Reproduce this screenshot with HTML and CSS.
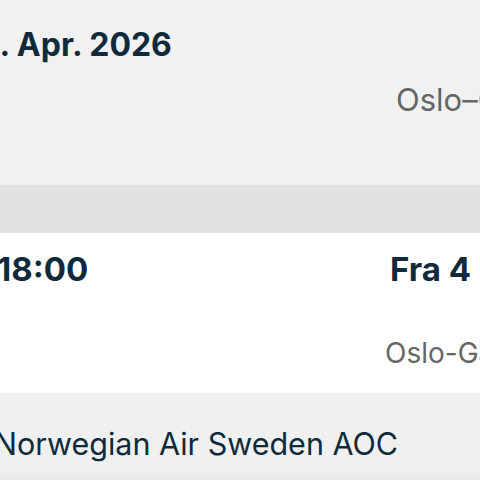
FILE: index.html
```html
<!DOCTYPE html>
<html lang="no">
<head>
<meta charset="utf-8">
<link rel="stylesheet" href="styles.css">
</head>
<body>
<main class="page">
  <section class="hero">
    <h1 class="date">4. Apr. 2026</h1>
    <p class="route route-top">Oslo–Gardermoen</p>
  </section>
  <div class="divider"></div>
  <section class="times">
    <div class="time-row">
      <span class="time">18:00</span>
      <span class="from">Fra 4</span>
    </div>
    <p class="route route-bottom">Oslo-Gardermoen</p>
  </section>
  <section class="carrier">
    <p class="carrier-name">Norwegian Air Sweden AOC</p>
  </section>
</main>
</body>
</html>
```
FILE: styles.css
```css
html, body {
  margin: 0;
  padding: 0;
  background: #ffffff;
}
body {
  width: 480px;
  height: 480px;
  overflow: hidden;
  font-family: Inter, "Noto Sans", sans-serif;
  color: #0f2b3b;
}
.page {
  display: flex;
  flex-direction: column;
  width: 480px;
}
.hero {
  background: #f1f1f1;
  height: 185px;
  display: flex;
  flex-direction: column;
  padding-top: 25px;
  box-sizing: border-box;
}
.date {
  margin: 0 0 0 -21px;
  font-size: 32px;
  font-weight: 700;
  line-height: 40px;
  white-space: nowrap;
}
.route {
  margin: 0;
  font-weight: 400;
  color: #666666;
  white-space: nowrap;
}
.route-top {
  margin-top: 16px;
  padding-left: 396px;
  font-size: 31px;
  line-height: 38px;
}
.divider {
  height: 48px;
  background: #e2e2e2;
}
.times {
  background: #ffffff;
  height: 160px;
  box-sizing: border-box;
  padding-top: 16px;
  display: flex;
  flex-direction: column;
}
.time-row {
  display: flex;
  white-space: nowrap;
  font-size: 33px;
  font-weight: 700;
  line-height: 40px;
}
.time {
  margin-left: -3px;
  width: 393px;
}
.route-bottom {
  margin-top: 47px;
  padding-left: 385px;
  font-size: 28px;
  line-height: 34px;
}
.carrier {
  height: 87px;
  box-sizing: border-box;
  padding-top: 32px;
  background: linear-gradient(to bottom, #f0f0f0 0, #f0f0f0 76px, #e6e6e6 87px);
}
.carrier-name {
  margin: 0 0 0 -6px;
  font-size: 30.5px;
  font-weight: 400;
  line-height: 38px;
  white-space: nowrap;
}
```
